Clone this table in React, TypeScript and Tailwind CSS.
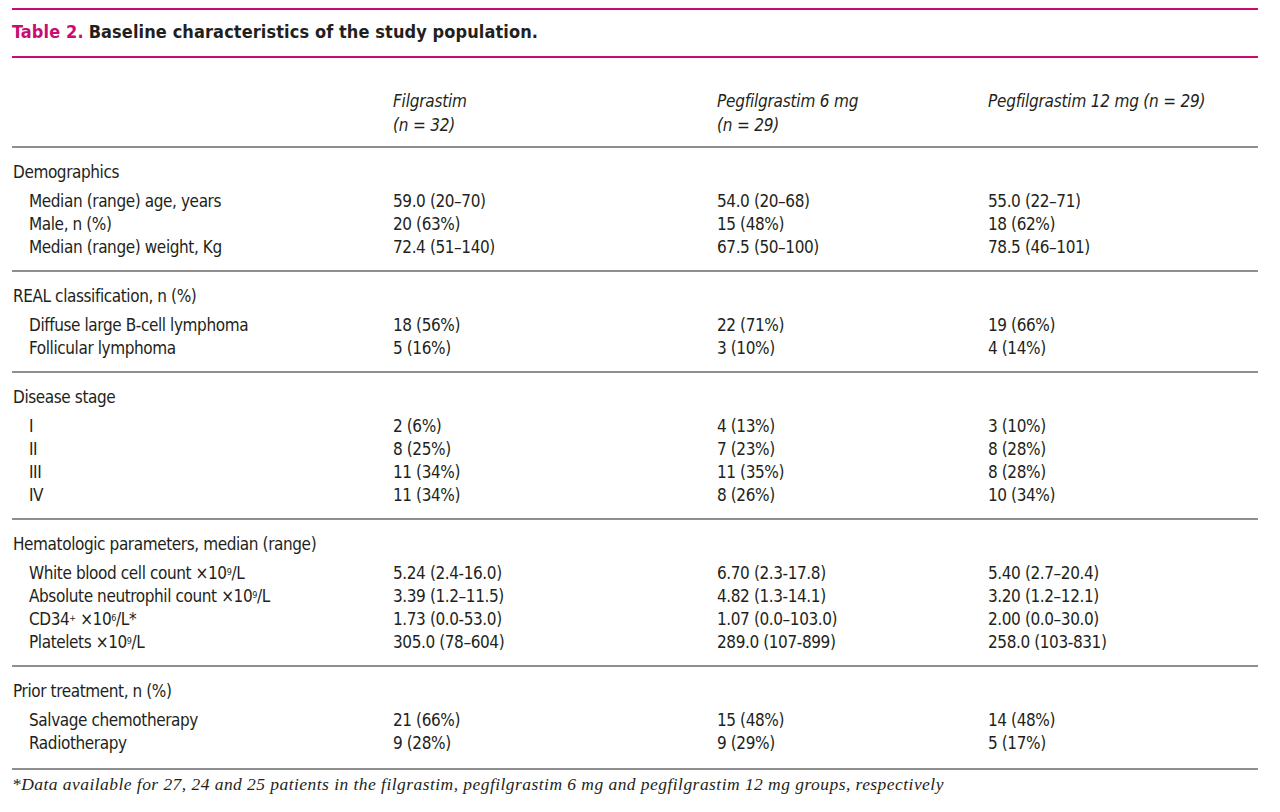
import type { ReactNode } from "react";

type Row = [ReactNode, string, string, string];

interface Section {
  title: string;
  rows: Row[];
}

function Pow({ base, exp }: { base: string; exp: string }) {
  return (
    <>
      ×{base}
      <sup className="text-[9px]">{exp}</sup>/L
    </>
  );
}

const sections: Section[] = [
  {
    title: "Demographics",
    rows: [
      ["Median (range) age, years", "59.0 (20–70)", "54.0 (20–68)", "55.0 (22–71)"],
      ["Male, n (%)", "20 (63%)", "15 (48%)", "18 (62%)"],
      ["Median (range) weight, Kg", "72.4 (51–140)", "67.5 (50–100)", "78.5 (46–101)"],
    ],
  },
  {
    title: "REAL classification, n (%)",
    rows: [
      ["Diffuse large B-cell lymphoma", "18 (56%)", "22 (71%)", "19 (66%)"],
      ["Follicular lymphoma", "5 (16%)", "3 (10%)", "4 (14%)"],
    ],
  },
  {
    title: "Disease stage",
    rows: [
      ["I", "2 (6%)", "4 (13%)", "3 (10%)"],
      ["II", "8 (25%)", "7 (23%)", "8 (28%)"],
      ["III", "11 (34%)", "11 (35%)", "8 (28%)"],
      ["IV", "11 (34%)", "8 (26%)", "10 (34%)"],
    ],
  },
  {
    title: "Hematologic parameters, median (range)",
    rows: [
      [
        <>White blood cell count <Pow base="10" exp="9" /></>,
        "5.24 (2.4-16.0)",
        "6.70 (2.3-17.8)",
        "5.40 (2.7–20.4)",
      ],
      [
        <>Absolute neutrophil count <Pow base="10" exp="9" /></>,
        "3.39 (1.2–11.5)",
        "4.82 (1.3-14.1)",
        "3.20 (1.2–12.1)",
      ],
      [
        <>
          CD34<sup className="text-[9px]">+</sup> <Pow base="10" exp="6" />*
        </>,
        "1.73 (0.0-53.0)",
        "1.07 (0.0–103.0)",
        "2.00 (0.0–30.0)",
      ],
      [<>Platelets <Pow base="10" exp="9" /></>, "305.0 (78–604)", "289.0 (107-899)", "258.0 (103-831)"],
    ],
  },
  {
    title: "Prior treatment, n (%)",
    rows: [
      ["Salvage chemotherapy", "21 (66%)", "15 (48%)", "14 (48%)"],
      ["Radiotherapy", "9 (28%)", "9 (29%)", "5 (17%)"],
    ],
  },
];

const grid = "grid grid-cols-[381px_324px_271px_1fr]";

export default function App() {
  return (
    <div className="min-h-[812px] w-[1280px] bg-white pt-[8px] pl-[12px] text-[#231f20] font-['DejaVu_Sans_Condensed','DejaVu_Sans',sans-serif]">
      <div className="w-[1246px]">
        <div className="h-[2px] bg-[#c90c74]" />
        <div className="flex h-[46px] items-center pb-[3px] text-[18px] font-bold tracking-[0.1px]">
          <span className="text-[#c90c74]">Table 2.</span>
          <span className="ml-[5px]">Baseline characteristics of the study population.</span>
        </div>
        <div className="h-[2px] bg-[#c90c74]" />

        <div className={`${grid} pt-[31px] pb-[9px] text-[17px] italic leading-[24px] tracking-[-0.2px]`}>
          <div />
          <div>
            Filgrastim
            <br />
            (n = 32)
          </div>
          <div>
            Pegfilgrastim 6 mg
            <br />
            (n = 29)
          </div>
          <div>Pegfilgrastim 12 mg (n = 29)</div>
        </div>
        <div className="h-[2px] bg-[#8f8f8f]" />

        {sections.map((s, idx) => (
          <div key={s.title}>
            <div
              className={`pt-[12px] text-[17px] tracking-[-0.4px] ${
                idx === sections.length - 1 ? "pb-[13px]" : "pb-[11px]"
              }`}
            >
              <div className="pl-[1px] leading-[24px]">{s.title}</div>
              <div className="mt-[6px] leading-[23px]">
                {s.rows.map((r, i) => (
                  <div key={i} className={grid}>
                    <div className="pl-[17px]">{r[0]}</div>
                    <div>{r[1]}</div>
                    <div>{r[2]}</div>
                    <div>{r[3]}</div>
                  </div>
                ))}
              </div>
            </div>
            <div className="h-[2px] bg-[#8f8f8f]" />
          </div>
        ))}

        <p className="pt-[2px] text-[17.5px] italic leading-[24px] tracking-[0.45px] font-['Liberation_Serif',serif]">
          *Data available for 27, 24 and 25 patients in the filgrastim, pegfilgrastim 6 mg and pegfilgrastim 12 mg groups,
          respectively
        </p>
      </div>
    </div>
  );
}
